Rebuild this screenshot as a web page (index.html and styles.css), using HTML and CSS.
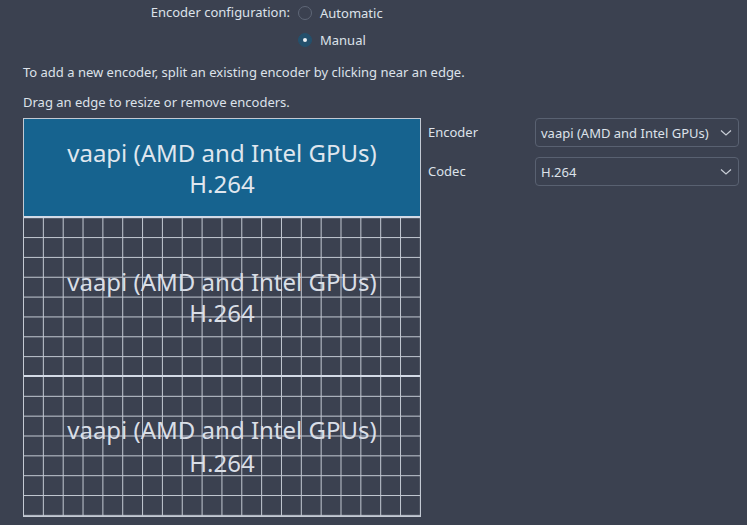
FILE: index.html
```html
<!DOCTYPE html>
<html>
<head>
<meta charset="utf-8">
<link rel="stylesheet" href="styles.css">
</head>
<body>
<div class="page">
  <div class="config">
    <div class="config-label">Encoder configuration:</div>
    <div class="radios">
      <label class="radio"><span class="radio-dot"></span><span>Automatic</span></label>
      <label class="radio"><span class="radio-dot checked"></span><span>Manual</span></label>
    </div>
  </div>
  <p class="hint first">To add a new encoder, split an existing encoder by clicking near an edge.</p>
  <p class="hint">Drag an edge to resize or remove encoders.</p>
  <div class="main">
    <div class="canvas">
      <div class="region selected r1"><span>vaapi (AMD and Intel GPUs)</span><span>H.264</span></div>
      <div class="divider"></div>
      <div class="region r2"><span>vaapi (AMD and Intel GPUs)</span><span>H.264</span></div>
      <div class="divider"></div>
      <div class="region r3"><span>vaapi (AMD and Intel GPUs)</span><span>H.264</span></div>
    </div>
    <div class="form">
      <div class="form-label">Encoder</div>
      <div class="combo"><span>vaapi (AMD and Intel GPUs)</span><svg class="chev" width="12" height="8" viewBox="0 0 12 8"><path d="M1 1.5 L6 6 L11 1.5" fill="none" stroke="#c9ced6" stroke-width="1.2"/></svg></div>
      <div class="form-label">Codec</div>
      <div class="combo"><span>H.264</span><svg class="chev" width="12" height="8" viewBox="0 0 12 8"><path d="M1 1.5 L6 6 L11 1.5" fill="none" stroke="#c9ced6" stroke-width="1.2"/></svg></div>
    </div>
  </div>
</div>
</body>
</html>
```
FILE: styles.css
```css
html, body {
  margin: 0;
  padding: 0;
  background: #3b4150;
}
body {
  width: 747px;
  height: 525px;
  overflow: hidden;
  font-family: "Noto Sans", "DejaVu Sans", sans-serif;
  font-size: 13px;
  color: #dde2ea;
}
.page {
  padding-left: 23px;
}
.config {
  display: flex;
  align-items: flex-start;
  margin-top: -1px;
}
.config-label {
  width: 275px;
  text-align: right;
  line-height: 27px;
  padding-right: 8px;
  box-sizing: border-box;
}
.radios {
  display: flex;
  flex-direction: column;
}
.radio {
  display: flex;
  align-items: center;
  height: 27px;
  gap: 8px;
}
.radio-dot {
  width: 12px;
  height: 12px;
  border-radius: 50%;
  border: 1px solid #5f6777;
  box-sizing: content-box;
  position: relative;
}
.radio-dot.checked {
  background: #24506c;
  border-color: #24506c;
}
.radio-dot.checked::after {
  content: "";
  position: absolute;
  left: 4px;
  top: 4px;
  width: 4px;
  height: 4px;
  border-radius: 50%;
  background: #eef1f5;
}
.hint {
  margin: 0;
  line-height: 18px;
}
.hint.first {
  margin-top: 10px;
}
.hint + .hint {
  margin-top: 12px;
}
.main {
  display: flex;
  align-items: flex-start;
  margin-top: 7px;
}
.canvas {
  width: 396px;
  height: 397px;
  border: 1px solid #c3c9d3;
  display: flex;
  flex-direction: column;
  background-color: #3b4150;
  background-image:
    linear-gradient(to right, #c3c9d3 1px, transparent 1px),
    linear-gradient(to bottom, #c3c9d3 1px, transparent 1px);
  background-size: 19.85px 19.85px;
  background-position: -1px -1px;
}
.region {
  display: flex;
  flex-direction: column;
  align-items: center;
  justify-content: center;
  font-size: 24px;
  line-height: 31px;
  color: #d9dee6;
  box-sizing: border-box;
}
.region.selected {
  background: #16638f;
  color: #dfe6ee;
}
.r1 { height: 97px; }
.r2 { height: 157px; }
.r3 { height: 139px; line-height: 33px; padding-bottom: 2px; }
.divider {
  height: 2px;
  background: #d3dae6;
}
.form {
  display: grid;
  grid-template-columns: 107px 204px;
  row-gap: 10px;
  margin-left: 7px;
  align-items: center;
}
.form-label {
  line-height: 29px;
}
.combo {
  height: 29px;
  box-sizing: border-box;
  border: 1px solid #596171;
  border-radius: 4px;
  display: flex;
  align-items: center;
  justify-content: space-between;
  padding: 0 6px 0 5px;
  font-size: 13px;
}
.chev {
  display: block;
}
```
